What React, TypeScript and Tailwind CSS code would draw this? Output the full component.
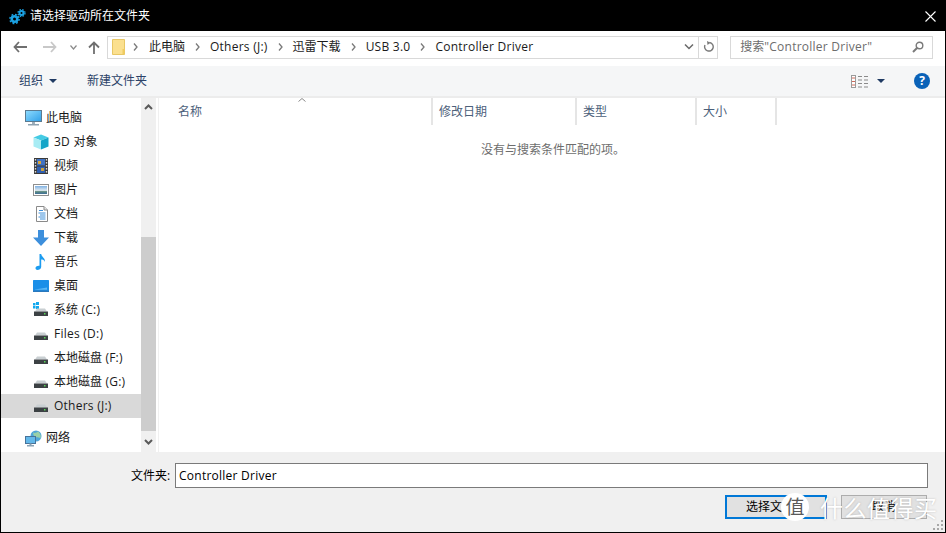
import React from "react";

const T = ({ s }: { s: string }) => (
  <>
    {s.split(/([\u4e00-\u9fff]+)/).map((p, i) =>
      /[\u4e00-\u9fff]/.test(p) || !p ? p : <span key={i} className="tracking-[0.25px] whitespace-pre">{p}</span>
    )}
  </>
);

const Pc = () => (
  <svg width="17" height="16" viewBox="0 0 17 16">
    <defs><linearGradient id="sc" x1="0" y1="0" x2="1" y2="1"><stop offset="0" stopColor="#8fdcff" /><stop offset="1" stopColor="#2f9fe8" /></linearGradient></defs>
    <rect x="0.5" y="0.5" width="16" height="11" fill="url(#sc)" stroke="#5b7a90" />
    <rect x="7" y="12" width="3" height="2" fill="#9fb0bc" />
    <rect x="3" y="14" width="11" height="1.5" fill="#8fa3b2" />
  </svg>
);
const Cube = () => (
  <svg width="16" height="16" viewBox="0 0 16 16">
    <path d="M8 0.5 15.5 3.5 8 6.5 0.5 3.5Z" fill="#45cbe4" />
    <path d="M0.5 3.5 8 6.5V15.5L0.5 12.5Z" fill="#a8ecf4" />
    <path d="M15.5 3.5 8 6.5V15.5L15.5 12.5Z" fill="#15a5c8" />
  </svg>
);
const Film = () => (
  <svg width="14" height="16" viewBox="0 0 14 16">
    <rect width="14" height="16" fill="#3a3a3a" />
    {[1, 4, 7, 10, 13].map((y) => (
      <g key={y}>
        <rect x="0.8" y={y} width="1.4" height="1.6" fill="#d8d8d8" />
        <rect x="11.8" y={y} width="1.4" height="1.6" fill="#d8d8d8" />
      </g>
    ))}
    <rect x="3" y="1" width="8" height="6.5" fill="#3f72c4" />
    <rect x="3" y="8.5" width="8" height="6.5" fill="#2f5fb0" />
    <rect x="4" y="3" width="3" height="3" fill="#d9a43b" />
    <rect x="7" y="10" width="3" height="3" fill="#c9a03d" />
  </svg>
);
const Pic = () => (
  <svg width="16" height="13" viewBox="0 0 16 13">
    <defs><linearGradient id="pc" x1="0" y1="0" x2="0" y2="1"><stop offset="0" stopColor="#7fb1e2" /><stop offset="0.55" stopColor="#dfeaf3" /><stop offset="0.7" stopColor="#5d8a80" /><stop offset="1" stopColor="#3f6f9a" /></linearGradient></defs>
    <rect x="0.5" y="0.5" width="15" height="11" fill="#fff" stroke="#8f8f8f" />
    <rect x="2" y="2" width="12" height="8" fill="url(#pc)" />
  </svg>
);
const Doc = () => (
  <svg width="13" height="16" viewBox="0 0 13 16">
    <path d="M1.5 0.5H9L12.5 4V15.5H1.5Z" fill="#fff" stroke="#8a8a8a" />
    <path d="M9 0.5V4H12.5" fill="#e4e4e4" stroke="#8a8a8a" />
    <path d="M4 4.5H8M3.5 7H10.5M5 9H10.5M3.5 11H10.5M5 13H10.5" stroke="#3f8fd8" strokeWidth="1" />
  </svg>
);
const Down = () => (
  <svg width="16" height="16" viewBox="0 0 16 16">
    <path d="M5 0H11V7.5H16L8 16 0 7.5H5Z" fill="#3d8fdc" />
  </svg>
);
const Music = () => (
  <svg width="12" height="16" viewBox="0 0 12 16">
    <path d="M4.5 0H6.2C6.5 3 10.5 4 10 8 9.5 6 7.5 5.5 6.2 5.5V13C6.2 15 4 16 2.5 16 1 16 0.3 15 0.5 13.8 0.8 12.4 3 11.3 4.5 11.8Z" fill="#1c9cf0" />
  </svg>
);
const Desk = () => (
  <svg width="16" height="12" viewBox="0 0 16 12">
    <rect width="16" height="11" x="0" y="0" rx="0.5" fill="#1a8fe8" />
    <path d="M2 9.5 14 7.5V9.8H2Z" fill="#5cb8f5" />
    <rect x="0" y="10.5" width="16" height="1.5" fill="#2a78bc" />
  </svg>
);
const Disk = ({ win }: { win?: boolean }) => (
  <svg width="16" height="16" viewBox="0 0 16 16">
    {win && (
      <g fill="#12a8ee">
        <rect x="0" y="1" width="2.5" height="2.5" />
        <rect x="3" y="0" width="3" height="3" />
        <rect x="0" y="4" width="2.5" height="2.5" />
        <rect x="3" y="4" width="3" height="3" />
      </g>
    )}
    <path d="M2 9.5 4 6.5H12L14 9.5Z" fill="#c9cfd2" />
    <rect x="1" y="9.5" width="14" height="4.5" fill="#3c4144" />
    <rect x="11" y="11" width="1.5" height="1.5" fill="#58d858" />
  </svg>
);
const Net = () => (
  <svg width="17" height="17" viewBox="0 0 17 17">
    <circle cx="11" cy="6" r="5.5" fill="#4fa6d8" />
    <path d="M8 2.5C10 3.5 12 2.5 13 1.5 15 3 16.5 6 15.5 8 13 7 10 8 8.5 5Z" fill="#9ad0a8" />
    <rect x="0.5" y="6.5" width="10" height="7" fill="#63b8ea" stroke="#47739a" />
    <rect x="4.5" y="13.5" width="2" height="1.5" fill="#8aa2b4" />
    <rect x="2" y="15" width="7" height="1.5" fill="#8aa2b4" />
  </svg>
);
const Gears = () => (
  <svg width="17" height="17" viewBox="0 0 17 17">
    <g fill="none" stroke="#1ba1e2">
      <circle cx="5.5" cy="11" r="2.8" strokeWidth="2.6" />
      <circle cx="5.5" cy="11" r="4.6" strokeWidth="1.5" strokeDasharray="1.8 1.8" />
      <circle cx="12.5" cy="5" r="2" strokeWidth="2" />
      <circle cx="12.5" cy="5" r="3.5" strokeWidth="1.3" strokeDasharray="1.5 1.3" />
    </g>
  </svg>
);

const items: [React.ReactNode, string][] = [
  [<Cube />, "3D 对象"],
  [<Film />, "视频"],
  [<Pic />, "图片"],
  [<Doc />, "文档"],
  [<Down />, "下载"],
  [<Music />, "音乐"],
  [<Desk />, "桌面"],
  [<Disk win />, "系统 (C:)"],
  [<Disk />, "Files (D:)"],
  [<Disk />, "本地磁盘 (F:)"],
  [<Disk />, "本地磁盘 (G:)"],
];

const NavSub = ({ icon, label, active }: { icon: React.ReactNode; label: string; active?: boolean }) => (
  <div className={`h-6 flex items-center pl-[32px] ${active ? "bg-[#d9d9d9]" : ""}`}>
    <span className="w-[16px] flex justify-center shrink-0">{icon}</span>
    <span className="ml-[5px] leading-none"><T s={label} /></span>
  </div>
);
const NavTop = ({ icon, label }: { icon: React.ReactNode; label: string }) => (
  <div className="h-6 flex items-center pl-[24px]">
    <span className="w-[17px] flex justify-center shrink-0">{icon}</span>
    <span className="ml-[4px] leading-none">{label}</span>
  </div>
);
const Chev = ({ d }: { d: string }) => (
  <svg width="9" height="6" viewBox="0 0 9 6"><path d={d} fill="none" stroke="#5a5a5a" strokeWidth="2" /></svg>
);
const Crumb = () => (
  <svg width="5" height="8" viewBox="0 0 5 8" className="mx-[10px]"><path d="M1 0.5 4 4 1 7.5" fill="none" stroke="#7a7a7a" strokeWidth="1.3" /></svg>
);
const Head = ({ w, label }: { w: string; label: string }) => (
  <div className={`${w} h-full border-r-2 border-[#e5e5e5] flex items-center shrink-0 text-[#4c607a]`}>{label}</div>
);

export default function App() {
  return (
    <div
      className="w-[946px] h-[533px] border border-black flex flex-col bg-white overflow-hidden relative text-[12px] text-black"
      style={{ fontFamily: '"Open Sans","Noto Sans CJK SC",sans-serif' }}
    >
      {/* title */}
      <div className="h-[30px] shrink-0 bg-black flex items-center text-white pl-[8px]">
        <Gears />
        <span className="ml-[4px] leading-none">请选择驱动所在文件夹</span>
        <svg width="11" height="11" viewBox="0 0 11 11" className="ml-auto mr-[9px]"><path d="M0.5 0.5 10.5 10.5M10.5 0.5 0.5 10.5" stroke="#fff" strokeWidth="1.1" /></svg>
      </div>
      {/* address */}
      <div className="h-[35px] shrink-0 flex items-center pl-[12px] pr-[12px] pb-[3px]">
        <svg width="14" height="12" viewBox="0 0 14 12"><path d="M6 1 1.5 6 6 11M2 6H14" fill="none" stroke="#6f6f6f" strokeWidth="1.8" /></svg>
        <svg width="14" height="12" viewBox="0 0 14 12" className="ml-[16px]"><path d="M8 1 12.5 6 8 11M12 6H0" fill="none" stroke="#c8c8c8" strokeWidth="1.8" /></svg>
        <svg width="7" height="5" viewBox="0 0 7 5" className="ml-[13px]"><path d="M0.5 0.5 3.5 4 6.5 0.5" fill="none" stroke="#8a8a8a" strokeWidth="1.2" /></svg>
        <svg width="12" height="13" viewBox="0 0 12 13" className="ml-[11px]"><path d="M1 6.5 6 1.5 11 6.5M6 2V13" fill="none" stroke="#6f6f6f" strokeWidth="1.8" /></svg>
        <div className="ml-[7px] w-[612px] h-[23px] border border-[#d9d9d9] flex items-center">
          <svg width="13" height="16" viewBox="0 0 13 16" className="ml-[4px]"><path d="M0.5 0.5H12.5V15.5H0.5Z" fill="#fbe08f" stroke="#e8c765" /><rect x="10.5" y="10" width="2" height="5" fill="#f0cc60" /></svg>
          <span className="ml-[-2px] flex"><Crumb /></span>
          <span className="ml-[1px] flex items-center text-[#1a1a1a] leading-none">
            此电脑<Crumb /><T s="Others (J:)" /><Crumb />迅雷下载<Crumb /><T s="USB 3.0" /><Crumb /><T s="Controller Driver" />
          </span>
          <div className="ml-auto flex items-center h-full">
            <svg width="10" height="6" viewBox="0 0 10 6" className="mr-[4px]"><path d="M1 0.5 5 4.5 9 0.5" fill="none" stroke="#6a6a6a" strokeWidth="1.5" /></svg>
            <div className="w-[19px] h-full border-l border-[#d9d9d9] flex items-center justify-center">
              <svg width="11" height="12" viewBox="0 0 11 12"><path d="M6.5 1.5A4.3 4.3 0 1 1 2 4" fill="none" stroke="#7a7a7a" strokeWidth="1.4" /><path d="M4 0 7.5 1.8 4.5 4Z" fill="#7a7a7a" /></svg>
            </div>
          </div>
        </div>
        <div className="ml-[12px] w-[203px] h-[23px] border border-[#d9d9d9] flex items-center pl-[9px] text-[#6d6d6d] leading-none">
          <T s={'搜索"Controller Driver"'} />
          <svg width="12" height="12" viewBox="0 0 12 12" className="ml-auto mr-[8px]"><circle cx="7.5" cy="4.5" r="3.3" fill="none" stroke="#7a7a7a" strokeWidth="1.4" /><path d="M5 7 1 11" stroke="#7a7a7a" strokeWidth="2" /></svg>
        </div>
      </div>
      {/* toolbar */}
      <div className="h-[32px] shrink-0 bg-[#f5f6f7] border-b-2 border-[#ececec] flex items-center pl-[18px] pr-[15px] text-[#2b4268]">
        <span>组织</span>
        <svg width="8" height="4" viewBox="0 0 8 4" className="ml-[6px]"><path d="M0 0H8L4 4Z" fill="#1f3a63" /></svg>
        <span className="ml-[30px]">新建文件夹</span>
        <svg width="17" height="13" viewBox="0 0 17 13" className="ml-auto">
          <rect x="0.5" y="0.5" width="4" height="12" fill="#fff" stroke="#9a9a9a" />
          <path d="M1 3H4M1 6.5H4M1 10H4" stroke="#d06a5a" />
          <path d="M7 1.5H11M13 1.5H17M7 5H11M13 5H17M7 8.5H11M13 8.5H17M7 12H11M13 12H17" stroke="#8a8a8a" />
        </svg>
        <svg width="8" height="4" viewBox="0 0 8 4" className="ml-[9px]"><path d="M0 0H8L4 4Z" fill="#1f3a63" /></svg>
        <div className="ml-[29px] w-[16px] h-[16px] rounded-full bg-[#0a62b8] text-white flex items-center justify-center text-[12px] font-bold leading-none">?</div>
      </div>
      {/* main */}
      <div className="flex-1 min-h-0 flex">
        <div className="w-[140px] shrink-0 pt-[8px] text-[#1a1a1a]">
          <NavTop icon={<Pc />} label="此电脑" />
          {items.map(([ic, l]) => <NavSub key={l} icon={ic} label={l} />)}
          <NavSub icon={<Disk />} label="Others (J:)" active />
          <div className="h-[8px]" />
          <NavTop icon={<Net />} label="网络" />
        </div>
        <div className="w-[15px] shrink-0 bg-[#f0f0f0] flex flex-col">
          <div className="h-[17px] flex items-center justify-center"><Chev d="M1 5 4.5 1.5 8 5" /></div>
          <div className="flex-1 pt-[122px]"><div className="h-[194px] bg-[#cdcdcd]" /></div>
          <div className="h-[20px] flex items-center justify-center"><Chev d="M1 1 4.5 4.5 8 1" /></div>
        </div>
        <div className="w-[3px] shrink-0 border-r border-[#f0f0f0]" />
        <div className="flex-1 min-w-0 relative">
          <div className="h-[27px] flex pl-[14px]">
            <div className="pl-[5px] w-[260px] h-full border-r-2 border-[#e5e5e5] flex items-center shrink-0 text-[#4c607a]">名称</div>
            <div className="pl-[6px] w-[144px] h-full border-r-2 border-[#e5e5e5] flex items-center shrink-0 text-[#4c607a]">修改日期</div>
            <div className="pl-[6px] w-[120px] h-full border-r-2 border-[#e5e5e5] flex items-center shrink-0 text-[#4c607a]">类型</div>
            <div className="pl-[6px] w-[80px] h-full border-r-2 border-[#e5e5e5] flex items-center shrink-0 text-[#4c607a]">大小</div>
          </div>
          <svg width="8" height="4" viewBox="0 0 8 4" className="absolute left-[139px] top-0"><path d="M0.5 3.5 4 0.5 7.5 3.5" fill="none" stroke="#8a8a8a" /></svg>
          <div className="mt-[16px] pl-[322px] text-[#6d6d6d] leading-[18px]">没有与搜索条件匹配的项。</div>
        </div>
      </div>
      {/* bottom */}
      <div className="h-[80px] shrink-0 bg-[#f0f0f0] relative">
        <div className="flex items-center pl-[130px] pr-[17px] pt-[11px]">
          <span className="w-[44px] shrink-0">文件夹:</span>
          <div className="flex-1 h-[25px] border border-[#7a7a7a] bg-white flex items-center pl-[3px] leading-none"><T s="Controller Driver" /></div>
        </div>
        <div className="flex justify-end pr-[18px] mt-[7px]">
          <div className="w-[102px] h-[24px] border-2 border-[#0078d7] bg-[#e1e1e1] flex items-center justify-center">选择文件夹</div>
          <div className="ml-[14px] w-[86px] h-[24px] border border-[#adadad] bg-[#e1e1e1] flex items-center justify-center">取消</div>
        </div>
        <svg width="12" height="12" viewBox="0 0 12 12" className="absolute right-[1px] bottom-[1px]">
          <g fill="#a8a8a8">
            <rect x="9" y="1" width="2" height="2" /><rect x="5" y="5" width="2" height="2" /><rect x="9" y="5" width="2" height="2" />
            <rect x="1" y="9" width="2" height="2" /><rect x="5" y="9" width="2" height="2" /><rect x="9" y="9" width="2" height="2" />
          </g>
        </svg>
      </div>
      {/* watermark */}
      <div className="absolute left-[780px] top-[492px] w-[28px] h-[28px] rounded-full bg-white flex items-center justify-center text-[19px] leading-none text-[#5a5a5a]">值</div>
      <div className="absolute left-[819px] top-[493px] text-[23px] leading-[28px] text-white tracking-[0.5px]" style={{ textShadow: "0 0 2px rgba(90,90,90,.35)" }}>什么值得买</div>
    </div>
  );
}
